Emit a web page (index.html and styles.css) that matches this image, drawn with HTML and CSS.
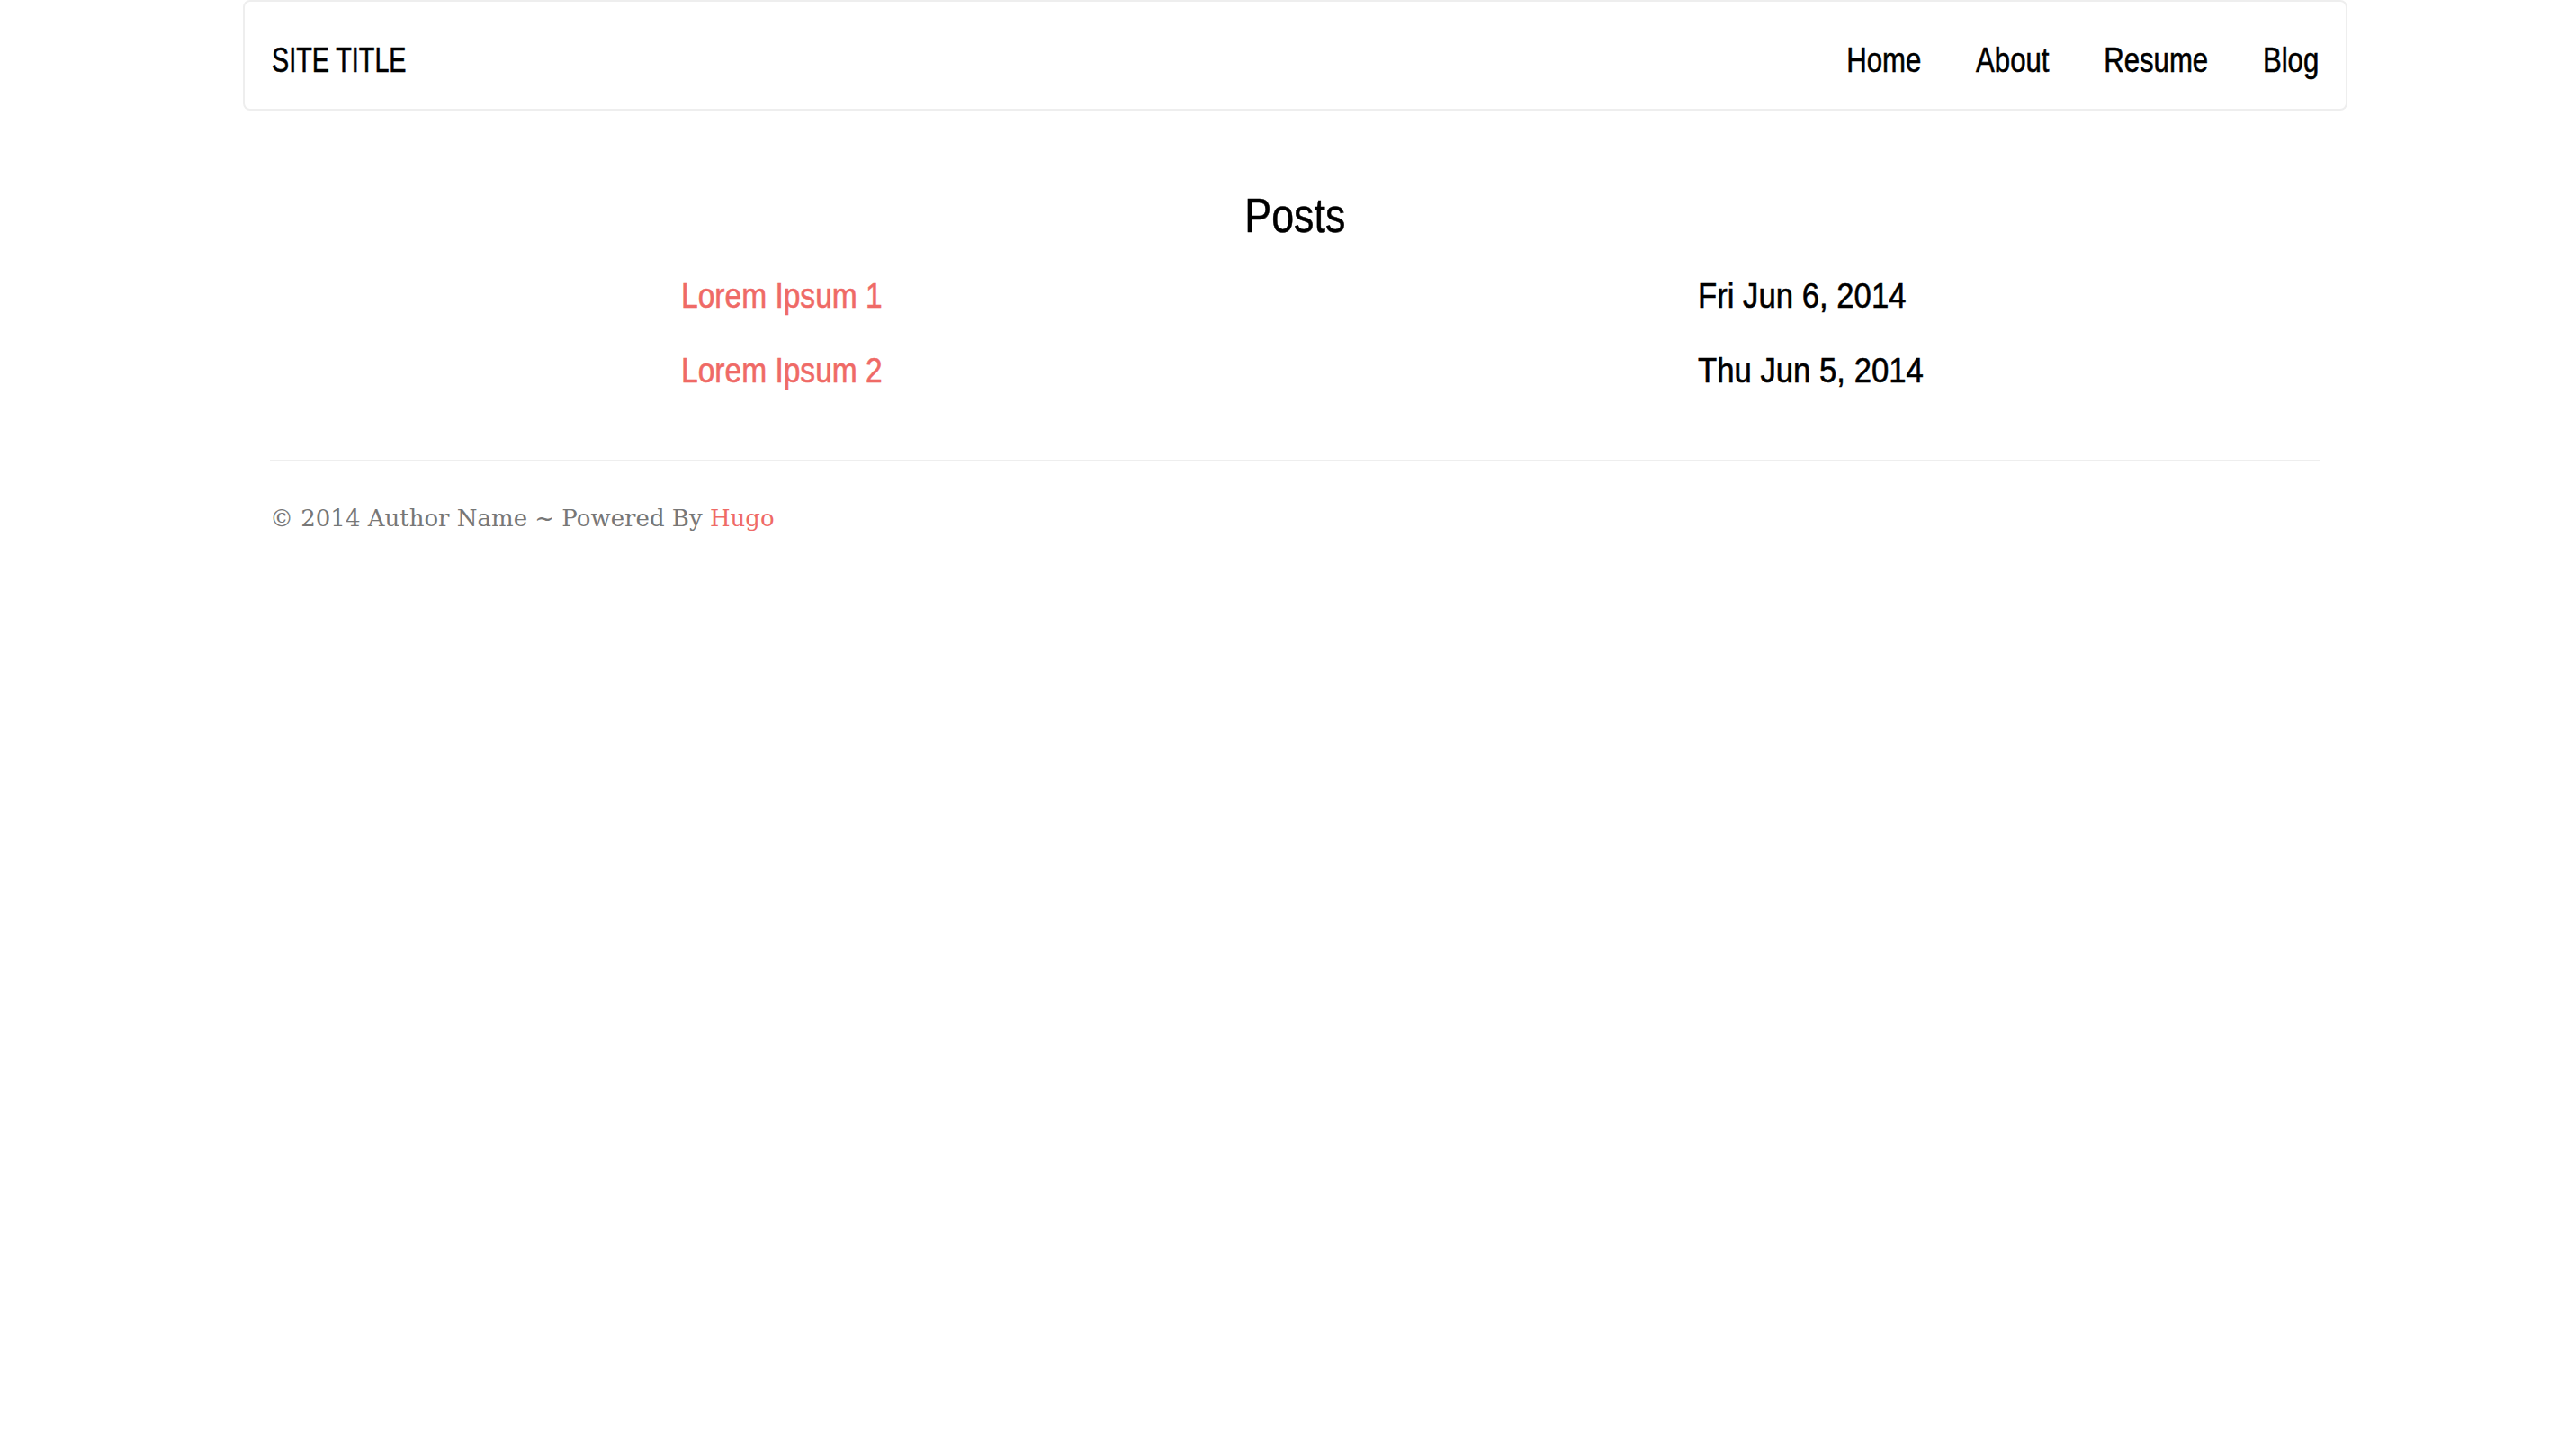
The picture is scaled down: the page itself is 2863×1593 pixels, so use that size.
FILE: index.html
```html
<!DOCTYPE html>
<html lang="en">
<head>
<meta charset="utf-8">
<title>Posts</title>
<link rel="stylesheet" href="styles.css">
</head>
<body>
<header class="navbar">
  <a class="brand" href="#">SITE TITLE</a>
  <nav class="nav">
    <a href="#">Home</a>
    <a href="#">About</a>
    <a href="#">Resume</a>
    <a href="#">Blog</a>
  </nav>
</header>
<main class="container">
  <h1 class="title"><span class="title-text">Posts</span></h1>
  <div class="posts">
    <div class="cell"><a class="post-link" href="#">Lorem Ipsum 1</a></div>
    <div class="cell"><span class="post-date">Fri Jun 6, 2014</span></div>
    <div class="cell"><a class="post-link" href="#">Lorem Ipsum 2</a></div>
    <div class="cell"><span class="post-date">Thu Jun 5, 2014</span></div>
  </div>
  <hr class="rule">
  <footer class="footer">© 2014 Author Name ~ Powered By <a href="#">Hugo</a></footer>
</main>
</body>
</html>
```
FILE: styles.css
```css
* { box-sizing: border-box; }
body {
  margin: 0;
  background: #fff;
  color: #000;
  font-family: "Liberation Sans", Arial, sans-serif;
}
a { text-decoration: none; }
.navbar {
  margin-left: 270px;
  width: 2339px;
  height: 123px;
  border: 2px solid #eeeeee;
  border-radius: 8px;
  display: flex;
  align-items: center;
  justify-content: space-between;
  padding: 10px 30px 0;
}
.brand {
  display: inline-block;
  color: #000;
  font-size: 38px;
  line-height: 1;
  transform: scaleX(0.756);
  transform-origin: left center;
  -webkit-text-stroke: 0.6px #000;
}
.nav {
  display: flex;
  gap: 74px;
  transform: scaleX(0.82);
  transform-origin: right center;
}
.nav a {
  color: #000;
  font-size: 38px;
  line-height: 1;
  -webkit-text-stroke: 0.6px #000;
}
.container {
  margin-left: 270px;
  width: 2339px;
  padding: 0 30px;
}
.title {
  margin: 88px 0 0;
  text-align: center;
  font-weight: normal;
  font-size: 53px;
  line-height: 58px;
}
.title-text {
  display: inline-block;
  transform: scaleX(0.845);
  transform-origin: center;
  -webkit-text-stroke: 0.5px #000;
}
.posts {
  margin: 18px 0 0 457px;
  display: grid;
  grid-template-columns: 1130px auto;
  font-size: 39px;
  line-height: 83px;
}
.post-link,
.post-date {
  display: inline-block;
  transform-origin: left center;
}
.post-link {
  color: #ef6a66;
  transform: scaleX(0.86);
  -webkit-text-stroke: 0.6px #ef6a66;
}
.post-date {
  color: #000;
  transform: scaleX(0.89);
  -webkit-text-stroke: 0.6px #000;
}
.rule {
  margin: 58px 0 0;
  border: 0;
  border-top: 2px solid #eeeeee;
  height: 0;
}
.footer {
  margin-top: 43px;
  font-family: "DejaVu Serif", "Liberation Serif", serif;
  font-size: 26px;
  line-height: 40px;
  color: #777777;
}
.footer a { color: #ef6a66; }
```
